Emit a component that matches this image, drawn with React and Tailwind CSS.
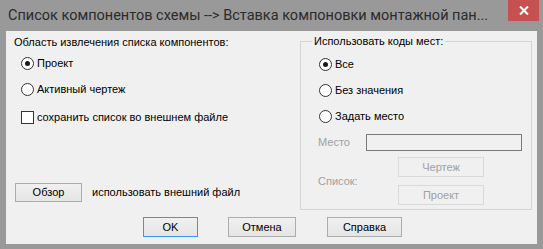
import React from "react";

function Radio({ checked, label, disabled }) {
  return (
    <div className="flex items-center h-[13px]">
      <span className="w-[13px] h-[13px] rounded-full border border-[#333] bg-white flex items-center justify-center">
        {checked ? <span className="w-[5px] h-[5px] rounded-full bg-[#1a1a1a]" /> : null}
      </span>
      <span className={"ml-[3px] " + (disabled ? "text-[#a0a0a0]" : "text-black")}>{label}</span>
    </div>
  );
}

function Btn({ label, className, primary, disabled }) {
  const border = primary
    ? "border-[#3399ff]"
    : disabled
      ? "border-[#d9d9d9]"
      : "border-[#acacac]";
  const bg = disabled ? "bg-[#f0f0f0]" : "bg-gradient-to-b from-[#f0f0f0] to-[#e5e5e5]";
  return (
    <div
      className={`flex items-center justify-center border ${border} ${bg} ${disabled ? "text-[#a0a0a0]" : "text-black"} ${className}`}
    >
      {label}
    </div>
  );
}

export default function App() {
  return (
    <div className="w-[543px] h-[249px] bg-[#999999] flex flex-col overflow-hidden">
      {/* title bar */}
      <div className="h-[31px] flex items-start relative">
        <div
          className="pl-[8px] pt-[7px] text-[14.5px] leading-[18px] text-[#2b2b2b] whitespace-nowrap"
          style={{ fontFamily: 'Roboto, "Noto Sans", sans-serif' }}
        >
          Список компонентов схемы --&gt; Вставка компоновки монтажной пан...
        </div>
        <div className="absolute right-[4px] top-0 w-[31px] h-[21px] bg-[#c75050] flex items-center justify-center">
          <svg width="10" height="9" viewBox="0 0 10 9">
            <path d="M1 0.5 L9 8.5 M9 0.5 L1 8.5" stroke="#fff" strokeWidth="2" />
          </svg>
        </div>
      </div>

      {/* client area */}
      <div
        className="mx-[6px] h-[213px] bg-[#f0f0f0] flex flex-col text-[11px] leading-[13px] text-black"
        style={{ fontFamily: '"Liberation Sans", Arial, sans-serif' }}
      >
        <div className="flex h-[181px]">
          {/* left column */}
          <div className="w-[294px] flex flex-col pl-[8px] pt-[5px]">
            <div>Область извлечения списка компонентов:</div>
            <div className="pl-[7px] mt-[8px] flex flex-col gap-[13px]">
              <Radio checked label="Проект" />
              <Radio label="Активный чертеж" />
            </div>
            <div className="pl-[7px] mt-[15px] flex items-center h-[13px]">
              <span className="w-[13px] h-[13px] border border-[#333] bg-white" />
              <span className="ml-[3px]">сохранить список во внешнем файле</span>
            </div>
            <div className="flex items-center mt-[59px] pl-[1px]">
              <Btn label="Обзор" className="w-[67px] h-[19px]" />
              <span className="ml-[10px]">использовать внешний файл</span>
            </div>
          </div>

          {/* right group box */}
          <div className="w-[232px] h-[169px] mt-[10px] border border-[#d5d5d5] relative flex flex-col pl-[18px]">
            <div className="absolute left-[11px] top-[-7px] bg-[#f0f0f0] px-[2px]">
              Использовать коды мест:
            </div>
            <div className="flex flex-col gap-[13px] mt-[16px]">
              <Radio checked label="Все" />
              <Radio label="Без значения" />
              <Radio label="Задать место" />
            </div>
            <div className="flex items-center mt-[11px] -ml-[1px]">
              <span className="w-[48px] text-[#a0a0a0]">Место</span>
              <div className="w-[156px] h-[17px] border border-[#7a7a7a] bg-[#f0f0f0]" />
            </div>
            <div className="flex items-center mt-[6px] -ml-[1px]">
              <span className="w-[80px] text-[#a0a0a0]">Список:</span>
              <div className="flex flex-col gap-[8px]">
                <Btn disabled label="Чертеж" className="w-[86px] h-[20px]" />
                <Btn disabled label="Проект" className="w-[86px] h-[20px]" />
              </div>
            </div>
          </div>
        </div>

        {/* bottom buttons */}
        <div className="flex mt-[5px]">
          <Btn primary label="OK" className="ml-[137px] w-[55px] h-[20px]" />
          <Btn label="Отмена" className="ml-[30px] w-[68px] h-[20px]" />
          <Btn label="Справка" className="ml-[31px] w-[75px] h-[20px]" />
        </div>
      </div>
    </div>
  );
}
